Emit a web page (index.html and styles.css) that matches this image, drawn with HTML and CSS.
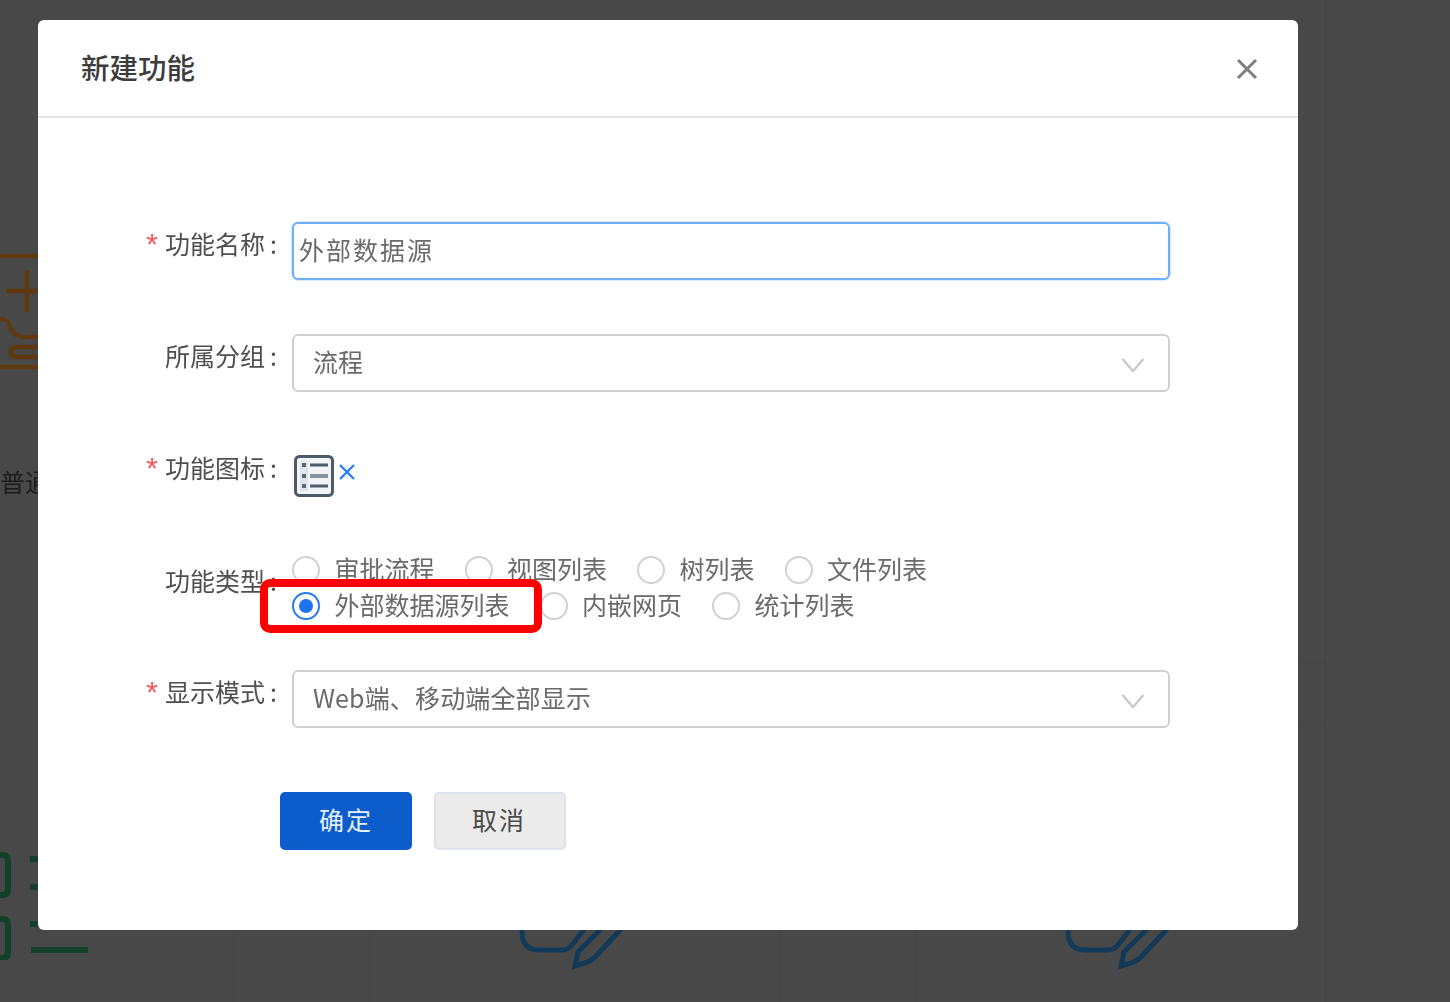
FILE: index.html
```html
<!DOCTYPE html>
<html lang="zh-CN">
<head>
<meta charset="utf-8">
<title>新建功能</title>
<link rel="stylesheet" href="styles.css">
</head>
<body>
<div class="backdrop">
  <span class="grid-line v" style="left:233px;top:930px;height:72px"></span>
  <span class="grid-line v" style="left:369px;top:930px;height:72px"></span>
  <span class="grid-line v" style="left:780px;top:930px;height:72px"></span>
  <span class="grid-line v" style="left:916px;top:930px;height:72px"></span>
  <span class="grid-line v" style="left:1325px;top:0;height:1002px"></span>
  <span class="grid-line h" style="left:1298px;top:662px;width:27px"></span>
  <span class="grid-line h" style="left:1298px;top:724px;width:27px"></span>
  <svg class="decor" width="60" height="140" viewBox="0 0 60 140" style="left:0;top:240px" fill="none" stroke="#5f3a10" stroke-width="4.500">
    <path d="M0 16H38M6 51H38M27 30V72M0 79H3C7 79 9 86 12 90C14 94 18 97 24 97H38M38 107H16C9 107 9 117 16 117H38M0 127H38"/>
  </svg>
  <span class="bg-text">普通</span>
  <svg class="decor" width="100" height="120" viewBox="0 0 100 120" style="left:0;top:840px" fill="none" stroke="#12402a" stroke-width="6">
    <path d="M-4 15H3Q8 15 8 21V49Q8 55 3 55H-4M-4 79H3Q8 79 8 85V112Q8 118 3 118H-4"/>
    <path d="M30 19H38M30 47H38M30 84H38M31 110H88"/>
  </svg>
  <svg class="decor" width="140" height="60" viewBox="0 0 140 60" style="left:500px;top:920px" fill="none" stroke="#123a58" stroke-width="5">
    <path d="M22 5V12Q22 30 40 30H62Q68 30 72 25L85 8M102 8L78 32L75 46L88 42Q92 40 96 36L122 8"/>
  </svg>
  <svg class="decor" width="140" height="60" viewBox="0 0 140 60" style="left:1046px;top:920px" fill="none" stroke="#123a58" stroke-width="5">
    <path d="M22 5V12Q22 30 40 30H62Q68 30 72 25L85 8M102 8L78 32L75 46L88 42Q92 40 96 36L122 8"/>
  </svg>
</div>

<div class="modal">
  <header class="modal-head">
    <h2 class="modal-title">新建功能</h2>
    <svg class="close" width="22" height="22" viewBox="0 0 22 22"><path d="M2 2L20 20M20 2L2 20" stroke="#7f7f7f" stroke-width="3" fill="none"/></svg>
  </header>
  <form class="form">
    <div class="row">
      <label class="label"><i class="req">*</i>功能名称<span class="colon">:</span></label>
      <div class="input focused">外部数据源</div>
    </div>
    <div class="row">
      <label class="label">所属分组<span class="colon">:</span></label>
      <div class="input select"><span>流程</span>
        <svg width="24" height="16" viewBox="0 0 24 16"><path d="M1.5 2L12 14L22.500 2" fill="none" stroke="#c8c8c8" stroke-width="2.200"/></svg>
      </div>
    </div>
    <div class="row row-icon">
      <label class="label"><i class="req">*</i>功能图标<span class="colon">:</span></label>
      <div class="icon-value">
        <svg width="40" height="42" viewBox="0 0 40 42" fill="none">
          <rect x="1.500" y="1.500" width="37" height="39" rx="4" fill="#f1f4f7" stroke="#4c5b6b" stroke-width="3"/>
          <rect x="6" y="6" width="8" height="30" fill="#dfe4ea"/>
          <path d="M16 10H34M16 31H34" stroke="#4c5b6b" stroke-width="3"/>
          <path d="M16 21H34" stroke="#86929e" stroke-width="4"/>
          <path d="M8 10H12M8 21H12M8 31H12" stroke="#5a6876" stroke-width="4"/>
        </svg>
        <svg class="icon-x" width="18" height="18" viewBox="0 0 18 18"><path d="M2 2L16 16M16 2L2 16" stroke="#1f7bff" stroke-width="2.200" fill="none"/></svg>
      </div>
    </div>
    <div class="row row-radio">
      <label class="label">功能类型<span class="colon">:</span></label>
      <div class="radios">
        <div class="radio-line">
          <span class="radio"><i class="dot"></i>审批流程</span>
          <span class="radio"><i class="dot"></i>视图列表</span>
          <span class="radio"><i class="dot"></i>树列表</span>
          <span class="radio"><i class="dot"></i>文件列表</span>
        </div>
        <div class="radio-line">
          <span class="radio"><i class="dot on"></i>外部数据源列表</span>
          <span class="radio"><i class="dot"></i>内嵌网页</span>
          <span class="radio"><i class="dot"></i>统计列表</span>
        </div>
        <div class="callout"></div>
      </div>
    </div>
    <div class="row">
      <label class="label"><i class="req">*</i>显示模式<span class="colon">:</span></label>
      <div class="input select wide"><span>Web端、移动端全部显示</span>
        <svg width="24" height="16" viewBox="0 0 24 16"><path d="M1.5 2L12 14L22.500 2" fill="none" stroke="#c8c8c8" stroke-width="2.200"/></svg>
      </div>
    </div>
    <div class="actions">
      <button type="button" class="btn primary">确定</button>
      <button type="button" class="btn">取消</button>
    </div>
  </form>
</div>
</body>
</html>
```
FILE: styles.css
```css
* { box-sizing: border-box; }
html, body { margin: 0; height: 100%; }
body {
  position: relative;
  width: 1450px;
  height: 1002px;
  overflow: hidden;
  background: #484848;
  font-family: "Noto Sans CJK SC", "Noto Sans", sans-serif;
  font-size: 25px;
  color: #595959;
}
.backdrop { position: absolute; inset: 0; filter: blur(0.6px); }
.decor { position: absolute; display: block; }
.grid-line { position: absolute; background: #444; }
.grid-line.v { width: 1px; }
.grid-line.h { height: 1px; }
.bg-text { position: absolute; left: 0; top: 463px; color: #1c1c1c; font-size: 25px; line-height: 36px; }

.modal {
  position: absolute;
  left: 38px;
  top: 20px;
  width: 1260px;
  height: 910px;
  background: #fff;
  border-radius: 6px;
  filter: blur(0.45px);
}
.modal-head {
  height: 98px;
  padding: 0 40px 0 43px;
  border-bottom: 2px solid #e6e6e6;
  display: flex;
  align-items: center;
  justify-content: space-between;
}
.modal-title {
  margin: 0;
  font-size: 28.500px;
  font-weight: 500;
  color: #3c3c3c;
  line-height: 40px;
  padding-bottom: 2px;
}
.close { display: block; margin-top: 2px; }

.form { padding-top: 104px; }
.row {
  display: flex;
  align-items: flex-start;
  height: 58px;
  margin-bottom: 54px;
}
.label {
  width: 254px;
  flex: none;
  text-align: right;
  line-height: 42px;
  color: #4f4f4f;
  white-space: nowrap;
}
.colon {
  display: inline-block;
  width: 27px;
  padding-left: 5px;
  text-align: left;
}
.req {
  font-style: normal;
  font-family: "Liberation Sans", sans-serif;
  color: #f5535a;
  margin-right: 7px;
  font-size: 30px;
  line-height: 20px;
}
.input {
  width: 878px;
  height: 58px;
  flex: none;
  border: 2px solid #cfcfcf;
  border-radius: 6px;
  line-height: 50px;
  padding: 0 5px;
  color: #6a6a6a;
  letter-spacing: 2px;
}
.input.focused {
  border-color: #6db0f8;
  box-shadow: 0 0 0 1px #d9eaff;
}
.input.select {
  display: flex;
  align-items: center;
  justify-content: space-between;
  padding: 0 23px 0 19px;
  letter-spacing: 0;
}
.input.select span { padding-bottom: 4px; }
.input.wide { letter-spacing: 0.150px; }
.input.select svg { display: block; margin-top: 3px; }

.icon-value { display: flex; align-items: center; padding: 9px 0 0 2px; }
.icon-x { margin-left: 4px; margin-top: -8px; }

.row-radio .label { margin-top: 1px; }
.radios { position: relative; margin-top: -8px; }
.radio-line { display: flex; height: 36px; align-items: center; }
.radio {
  display: flex;
  align-items: center;
  margin-right: 30px;
  color: #6a6a6a;
  white-space: nowrap;
}
.dot {
  width: 28px;
  height: 28px;
  flex: none;
  border: 2px solid #d2d2d2;
  border-radius: 50%;
  margin-right: 14.500px;
  position: relative;
  top: 2px;
  background: #fff;
}
.dot.on { border-color: #2a7bf0; }
.dot.on::after {
  content: "";
  position: absolute;
  left: 5px;
  top: 5px;
  width: 14px;
  height: 14px;
  border-radius: 50%;
  background: #1f73f0;
}
.callout {
  position: absolute;
  left: -32px;
  top: 29px;
  width: 282px;
  height: 54px;
  border: 8px solid #f00;
  border-radius: 10px;
}

.actions { display: flex; gap: 22px; padding-left: 242px; margin-top: 64px; }
.btn {
  width: 132px;
  height: 58px;
  border-radius: 5px;
  border: 2px solid #dde2ee;
  background: #ebebeb;
  color: #4a4a4a;
  font: inherit;
  letter-spacing: 2px;
  padding: 0 2px 4px 0;
}
.btn.primary { background: #0c5ccc; border-color: #0c5ccc; color: #e6f0ff; padding: 0 0 4px 0; }
```
